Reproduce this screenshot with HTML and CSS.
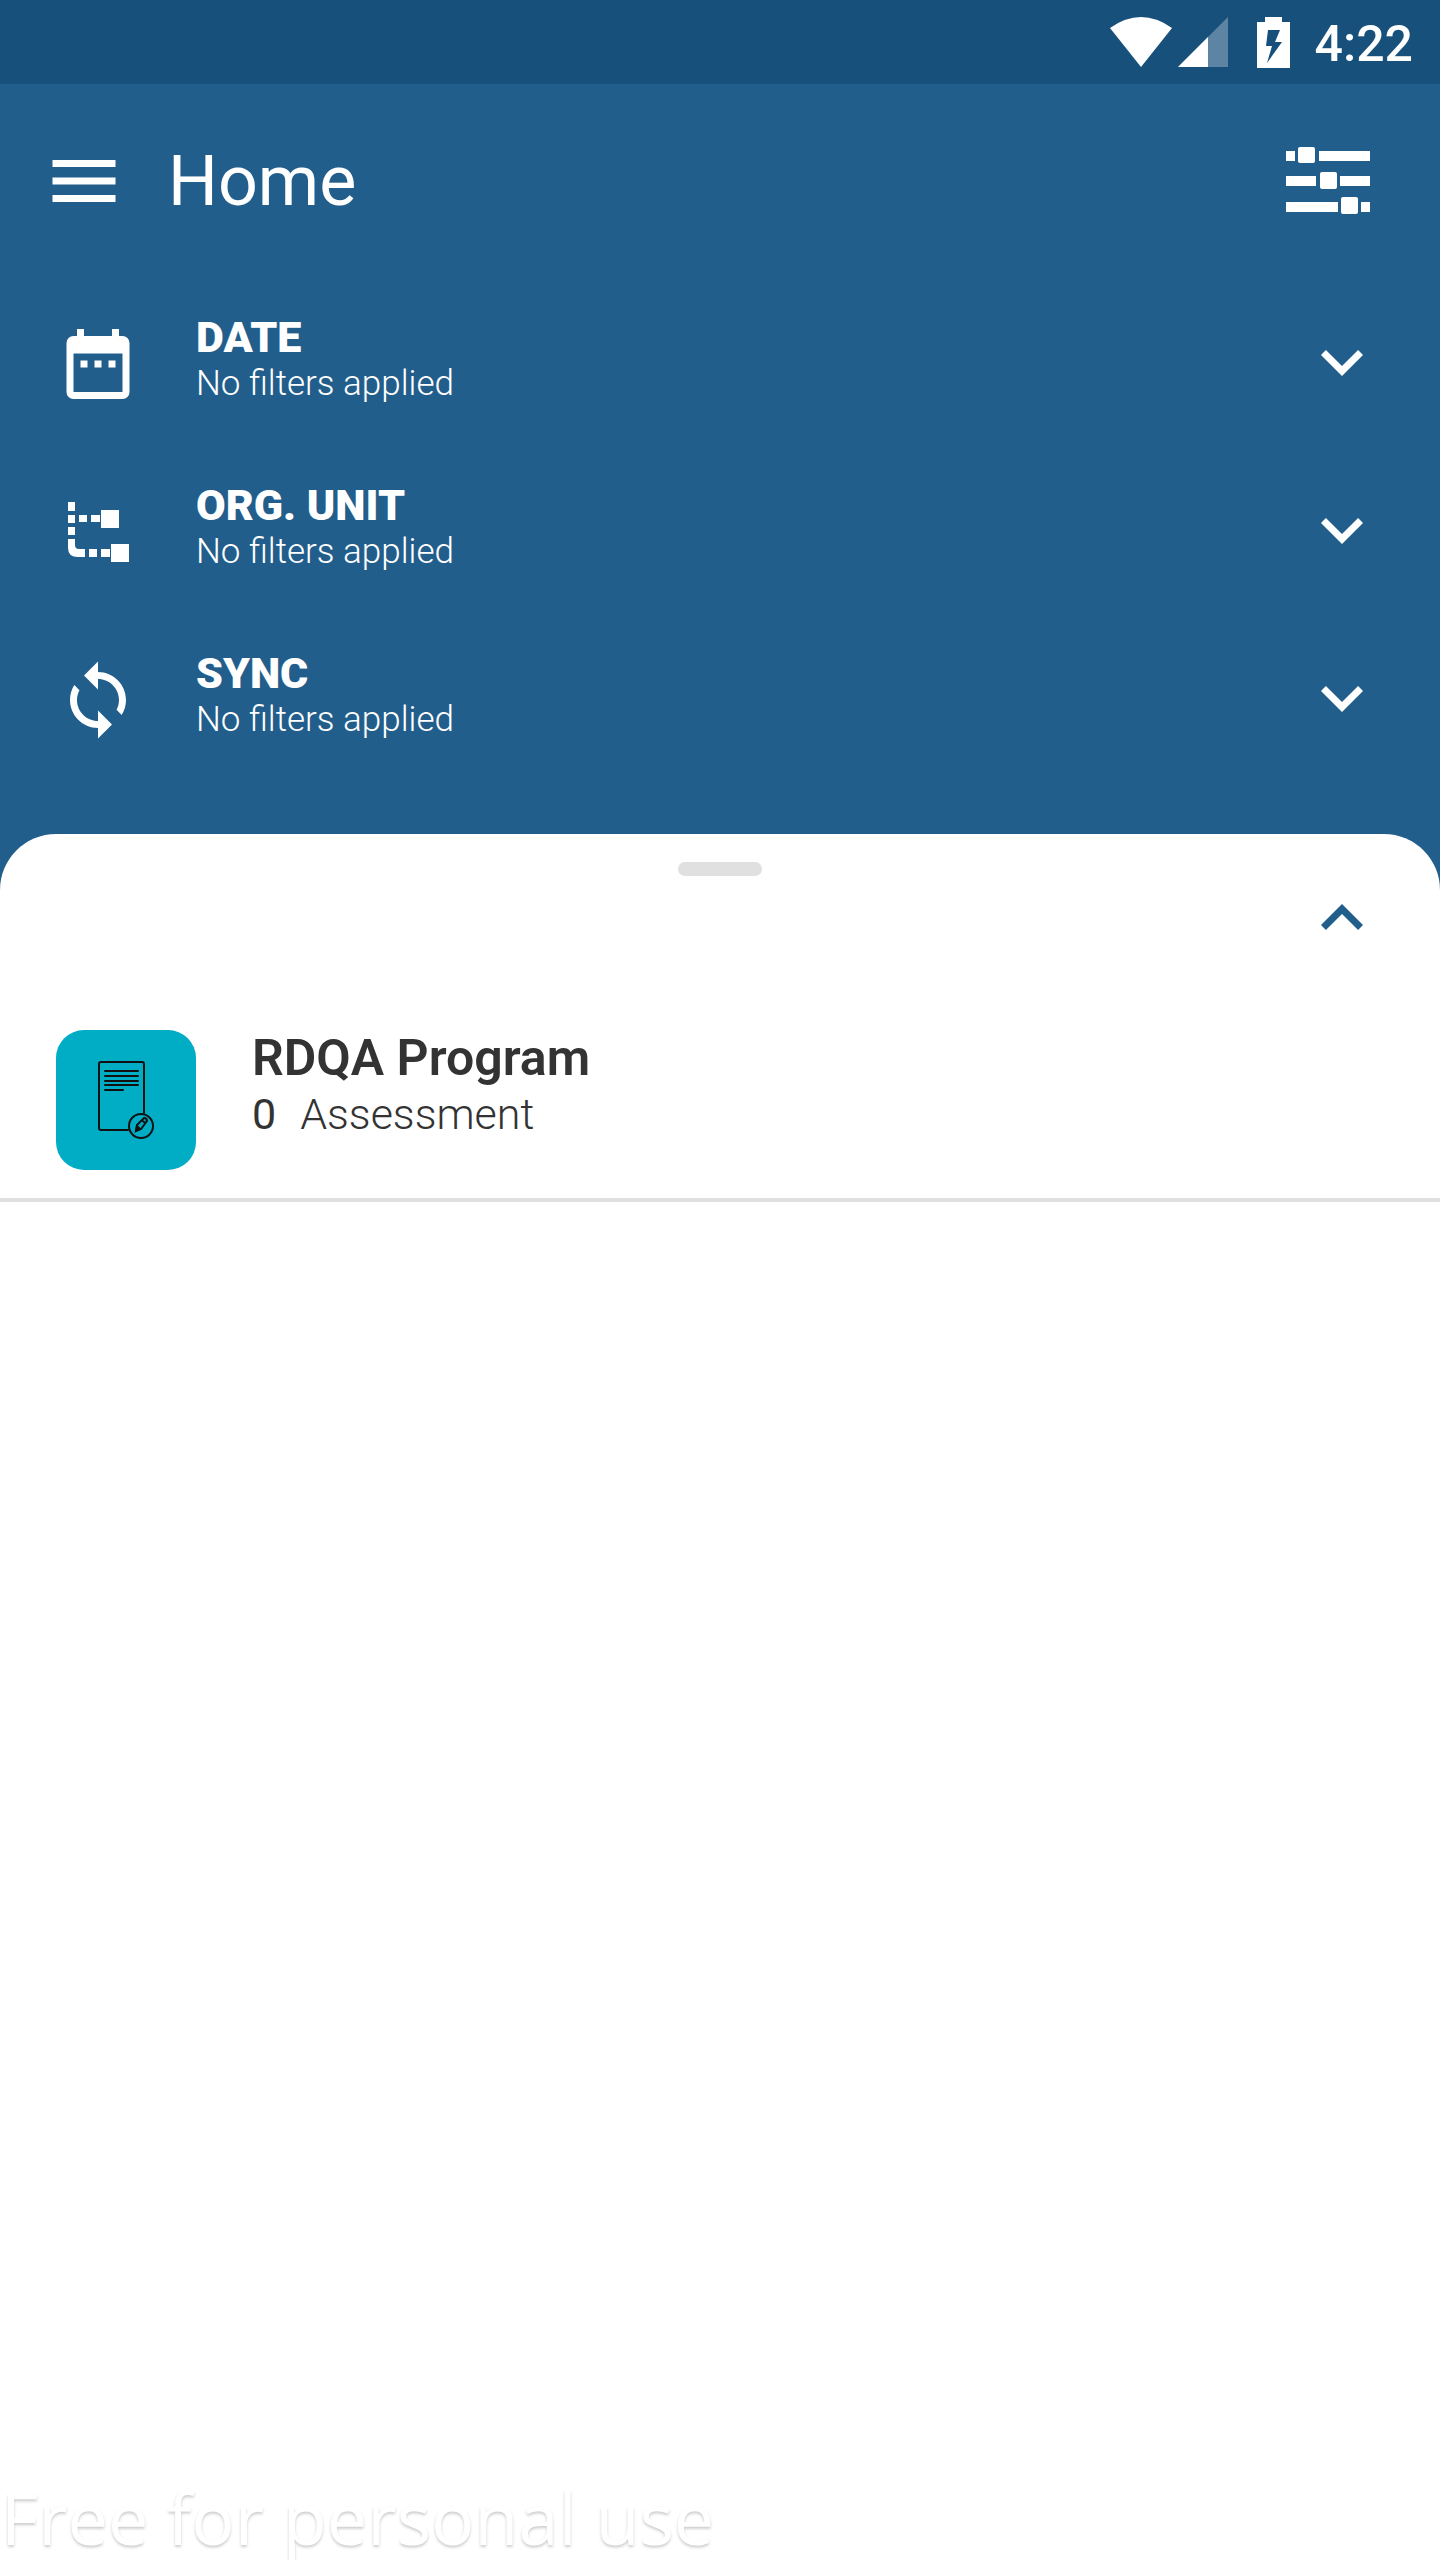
FILE: index.html
```html
<!DOCTYPE html>
<html lang="en">
<head>
<meta charset="utf-8">
<meta name="viewport" content="width=device-width, initial-scale=1">
<title>Home</title>
<link rel="stylesheet" href="styles.css">
</head>
<body>
<div class="status-bar">
  <svg class="status-icon wifi" viewBox="0 0 62 50" aria-hidden="true"><path d="M0 11Q31-11 62 11L31 50Z"/></svg>
  <svg class="status-icon signal" viewBox="0 0 50 50" aria-hidden="true"><path d="M50 0V50H0Z" opacity=".3"/><path d="M30 20V50H0Z"/></svg>
  <svg class="status-icon battery" viewBox="0 0 33 51" aria-hidden="true"><path fill-rule="evenodd" d="M8 0H25V5H33V51H0V5H8ZM11 13L9 29H15L10 46L25 25H18L23 13Z"/></svg>
  <time class="clock">4:22</time>
</div>
<header class="toolbar">
  <button class="icon-button" type="button" aria-label="Menu">
    <svg class="icon" viewBox="0 0 24 24"><path d="M3 18h18v-2H3v2zm0-5h18v-2H3v2zm0-7v2h18V6H3z"/></svg>
  </button>
  <h1 class="title">Home</h1>
  <button class="icon-button" type="button" aria-label="Filters">
    <svg class="icon" viewBox="0 0 84 84"><path d="M0 12h9v10H0zM33 12h51v10H33zM0 37h30v10H0zM54 37h30v10H54zM0 63h52v10H0zM75 63h9v10h-9z"/><rect x="12" y="8" width="17" height="16" rx="2"/><rect x="34" y="33" width="17" height="17" rx="2"/><rect x="55" y="58" width="17" height="17" rx="2"/></svg>
  </button>
</header>
<section class="filters" aria-label="Filters">
  <button class="filter" type="button">
    <svg class="icon" viewBox="0 0 24 24" aria-hidden="true"><path fill-rule="evenodd" d="M6 2h2v2h8V2h2v2h1a2 2 0 0 1 2 2v14a2 2 0 0 1-2 2H5a2 2 0 0 1-2-2V6a2 2 0 0 1 2-2h1zM5 9v11h14V9zM7 11h2v2H7zM11 11h2v2h-2zM15 11h2v2h-2z"/></svg>
    <span class="filter-text"><span class="filter-name">DATE</span><span class="filter-value">No filters applied</span></span>
    <svg class="icon" viewBox="0 0 24 24" aria-hidden="true"><path d="M16.6 8 12 12.6 7.4 8 6 9.4l6 6 6-6z"/></svg>
  </button>
  <button class="filter" type="button">
    <svg class="icon" viewBox="0 0 84 84" aria-hidden="true"><path d="M12 12h7v9h-7zM12 25h7v8h-7zM12 37h7v8h-7zM23 25h8v7h-8zM35 25h9v7h-9zM45 20h18v18H45zM12 49h7v6q0 4 4 4h6v8h-7q-10 0-10-9zM33 59h8v8h-8zM45 59h9v8h-9zM55 54h18v18H55z"/></svg>
    <span class="filter-text"><span class="filter-name">ORG. UNIT</span><span class="filter-value">No filters applied</span></span>
    <svg class="icon" viewBox="0 0 24 24" aria-hidden="true"><path d="M16.6 8 12 12.6 7.4 8 6 9.4l6 6 6-6z"/></svg>
  </button>
  <button class="filter" type="button">
    <svg class="icon" viewBox="0 0 24 24" aria-hidden="true"><path d="M12 4V1L8 5l4 4V6c3.31 0 6 2.69 6 6 0 1.01-.25 1.97-.7 2.8l1.46 1.46C19.54 15.03 20 13.57 20 12c0-4.42-3.58-8-8-8zm0 14c-3.31 0-6-2.69-6-6 0-1.01.25-1.97.7-2.8L5.24 7.74C4.46 8.97 4 10.43 4 12c0 4.42 3.58 8 8 8v3l4-4-4-4v3z"/></svg>
    <span class="filter-text"><span class="filter-name">SYNC</span><span class="filter-value">No filters applied</span></span>
    <svg class="icon" viewBox="0 0 24 24" aria-hidden="true"><path d="M16.6 8 12 12.6 7.4 8 6 9.4l6 6 6-6z"/></svg>
  </button>
</section>
<main class="sheet">
  <div class="handle"></div>
  <button class="icon-button collapse" type="button" aria-label="Collapse filters">
    <svg class="icon" viewBox="0 0 24 24"><path d="M12 8l-6 6 1.41 1.41L12 10.83l4.59 4.58L18 14z"/></svg>
  </button>
  <a class="program" href="#">
    <span class="program-icon">
      <svg class="icon document" viewBox="0 0 140 140" aria-hidden="true"><path d="M72 100H45q-2 0-2-2V34q0-2 2-2h41q2 0 2 2v49M49 41h33M49 46h33M49 51h33M49 55h33M49 60h18"/><circle cx="85" cy="96" r="12"/><path d="m80 101 1-6 7-7q3 0 3 3l-6 8zM86 90l3 3"/><path d="m80 101 1-5 3 3z" fill="currentColor"/></svg>
    </span>
    <span class="program-text">
      <span class="program-name">RDQA Program</span>
      <span class="program-count"><b class="count">0</b><span>Assessment</span></span>
    </span>
  </a>
</main>
<footer class="watermark">Free for personal use</footer>
</body>
</html>
```
FILE: styles.css
```css
* { box-sizing: border-box; }

body {
  margin: 0;
  min-height: 100vh;
  display: flex;
  flex-direction: column;
  background: #225e8c;
  color: #fff;
  font-family: Roboto, "Liberation Sans", sans-serif;
}

button {
  border: 0;
  padding: 0;
  background: none;
  color: inherit;
  font: inherit;
  text-align: left;
}

.status-bar {
  display: flex;
  align-items: center;
  justify-content: flex-end;
  height: 84px;
  padding-right: 27px;
  background: #17507b;
}

.status-icon { fill: currentColor; }
.wifi { width: 62px; height: 50px; margin-right: 6px; }
.signal { width: 50px; height: 50px; margin-right: 29px; }
.battery { width: 33px; height: 51px; margin-right: 25px; }
.clock { font-size: 50px; font-weight: 500; line-height: 56px; padding-top: 4px; }

.toolbar {
  display: flex;
  align-items: center;
  gap: 42px;
  height: 194px;
  padding: 0 70px 0 42px;
}

.title {
  flex: 1;
  margin: 0;
  font-size: 70px;
  font-weight: 400;
  line-height: 84px;
}

.icon-button { display: block; }
.icon { display: block; flex: none; width: 84px; height: 84px; fill: currentColor; }

.filters { padding: 2px 0 50px; }

.filter {
  display: flex;
  align-items: center;
  gap: 56px;
  width: 100%;
  height: 168px;
  padding: 0 56px;
}

.filter-text { flex: 1; padding-bottom: 8px; }
.filter-name { display: block; font-size: 43px; font-weight: 900; line-height: 48px; }
.filter-value { display: block; font-size: 35px; font-weight: 300; line-height: 46px; }

.sheet {
  flex: 1;
  padding-top: 28px;
  border-radius: 56px 56px 0 0;
  background: #fff;
  color: #333;
}

.handle {
  width: 84px;
  height: 14px;
  margin: 0 auto;
  border-radius: 7px;
  background: #e0e0e0;
}

.collapse { margin: 0 56px 42px auto; color: #225e8c; }

.program {
  display: flex;
  gap: 56px;
  padding: 28px 56px;
  border-bottom: 4px solid #e0e0e0;
  color: inherit;
  text-decoration: none;
}

.program-icon { border-radius: 28px; background: #00adc5; color: #111; }
.document { width: 140px; height: 140px; fill: none; stroke: currentColor; stroke-width: 2; stroke-linecap: round; }
.program-name { display: block; font-size: 50px; font-weight: 600; line-height: 56px; }
.program-count { display: flex; gap: 24px; font-size: 43px; font-weight: 300; line-height: 56px; }
.count { font-weight: 400; }

.watermark {
  background: #fff;
  padding-left: 1px;
  font-family: "Open Sans", "Noto Sans", sans-serif;
  font-size: 72px;
  line-height: 86px;
  text-shadow: 0 2px 3px #ccc;
}
```
